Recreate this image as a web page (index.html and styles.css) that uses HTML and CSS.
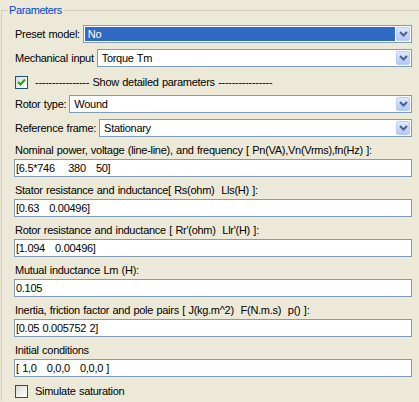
FILE: index.html
```html
<!DOCTYPE html>
<html>
<head>
<meta charset="utf-8">
<link rel="stylesheet" href="styles.css">
</head>
<body>
<fieldset class="group">
  <legend class="group-title">Parameters</legend>
  <div class="rows">
    <div class="select-row">
      <span class="lbl">Preset model:</span>
      <div class="combo combo-focus"><span class="combo-text">No</span><span class="combo-btn"><svg width="9" height="6" viewBox="0 0 9 6"><path d="M1 1 L4.5 4.5 L8 1" fill="none" stroke="#4d6185" stroke-width="2"/></svg></span></div>
    </div>
    <div class="select-row">
      <span class="lbl">Mechanical input</span>
      <div class="combo"><span class="combo-text">Torque Tm</span><span class="combo-btn"><svg width="9" height="6" viewBox="0 0 9 6"><path d="M1 1 L4.5 4.5 L8 1" fill="none" stroke="#4d6185" stroke-width="2"/></svg></span></div>
    </div>
    <div class="check-row check-top">
      <span class="check checked"><svg width="9" height="9" viewBox="0 0 9 9"><path d="M1 4 L3.5 6.5 L8 1.5" fill="none" stroke="#21a121" stroke-width="2"/></svg></span>
      <span class="check-lbl">---------------- Show detailed parameters ----------------</span>
    </div>
    <div class="select-row">
      <span class="lbl">Rotor type:</span>
      <div class="combo"><span class="combo-text">Wound</span><span class="combo-btn"><svg width="9" height="6" viewBox="0 0 9 6"><path d="M1 1 L4.5 4.5 L8 1" fill="none" stroke="#4d6185" stroke-width="2"/></svg></span></div>
    </div>
    <div class="select-row">
      <span class="lbl">Reference frame:</span>
      <div class="combo"><span class="combo-text">Stationary</span><span class="combo-btn"><svg width="9" height="6" viewBox="0 0 9 6"><path d="M1 1 L4.5 4.5 L8 1" fill="none" stroke="#4d6185" stroke-width="2"/></svg></span></div>
    </div>
    <div class="field">
      <div class="field-lbl">Nominal power, voltage (line-line), and frequency [ Pn(VA),Vn(Vrms),fn(Hz) ]:</div>
      <div class="edit">[6.5*746&nbsp;&nbsp;&nbsp;&nbsp;380&nbsp;&nbsp;&nbsp;50]</div>
    </div>
    <div class="field">
      <div class="field-lbl">Stator resistance and inductance[ Rs(ohm)&nbsp;&nbsp;Lls(H) ]:</div>
      <div class="edit">[0.63&nbsp;&nbsp;&nbsp;0.00496]</div>
    </div>
    <div class="field">
      <div class="field-lbl">Rotor resistance and inductance [ Rr'(ohm)&nbsp;&nbsp;Llr'(H) ]:</div>
      <div class="edit">[1.094&nbsp;&nbsp;&nbsp;0.00496]</div>
    </div>
    <div class="field">
      <div class="field-lbl">Mutual inductance Lm (H):</div>
      <div class="edit">0.105</div>
    </div>
    <div class="field">
      <div class="field-lbl">Inertia, friction factor and pole pairs [ J(kg.m^2)&nbsp;&nbsp;F(N.m.s)&nbsp;&nbsp;p() ]:</div>
      <div class="edit">[0.05 0.005752 2]</div>
    </div>
    <div class="field">
      <div class="field-lbl">Initial conditions</div>
      <div class="edit">[ 1,0&nbsp;&nbsp;&nbsp;0,0,0&nbsp;&nbsp;&nbsp;0,0,0 ]</div>
    </div>
    <div class="check-row check-bottom">
      <span class="check"></span>
      <span class="check-lbl">Simulate saturation</span>
    </div>
  </div>
</fieldset>
</body>
</html>
```
FILE: styles.css
```css
html, body {
  margin: 0;
  padding: 0;
  background: #ece9d8;
}
body {
  font-family: "Liberation Sans", Arial, sans-serif;
  font-size: 11px;
  letter-spacing: -0.28px;
  word-spacing: 0.6px;
  color: #000;
  overflow: hidden;
  width: 419px;
  height: 402px;
}
.group {
  margin: 3px 0 0 1px;
  padding: 0;
  border: 0;
  border-top: 1px solid #d0d0bf;
  border-left: 1px solid #d0d0bf;
  min-width: 0;
  height: 398px;
  box-sizing: border-box;
}
.group-title {
  margin-left: 6px;
  padding: 0 2px 0 1px;
  color: #0046d5;
  line-height: 14px;
  font-size: 11px;
  letter-spacing: -0.4px;
}
.rows {
  display: flex;
  flex-direction: column;
  padding: 8px 0 0 12px;
  width: 398px;
}
.select-row {
  display: flex;
  align-items: center;
  gap: 3px;
  margin-bottom: 6px;
  padding-left: 1px;
}
.lbl {
  white-space: nowrap;
  line-height: 14px;
}
.combo {
  flex: 1;
  height: 18px;
  box-sizing: border-box;
  border: 1px solid #7f9db9;
  background: #fff;
  display: flex;
  align-items: stretch;
  padding: 1px;
}
.combo-text {
  flex: 1;
  padding-left: 3px;
  line-height: 14px;
}
.combo-focus .combo-text {
  background: #316ac5;
  color: #fff;
  margin-right: 1px;
}
.combo-btn {
  width: 14px;
  box-sizing: border-box;
  border: 1px solid #b9cdf6;
  border-radius: 2px;
  background: linear-gradient(to bottom, #dfe8fe 0%, #c2d3fc 60%, #b4c8f7 100%);
  display: flex;
  align-items: center;
  justify-content: center;
}
.check-row {
  display: flex;
  align-items: center;
  gap: 7px;
  padding-left: 1px;
}
.check-top {
  margin-top: 2px;
  margin-bottom: 6px;
}
.check-bottom {
  margin-top: 1px;
}
.check {
  width: 13px;
  height: 13px;
  box-sizing: border-box;
  border: 1px solid #1c5180;
  background: linear-gradient(135deg, #dcdcd7 0%, #f4f4f0 70%, #ffffff 100%);
  display: flex;
  align-items: center;
  justify-content: center;
}
.check-lbl {
  white-space: nowrap;
  line-height: 14px;
}
.field {
  display: flex;
  flex-direction: column;
  margin-bottom: 6px;
}
.field-lbl {
  line-height: 14px;
  padding-left: 1px;
  margin-bottom: 2px;
  white-space: nowrap;
}
.edit {
  height: 18px;
  box-sizing: border-box;
  border: 1px solid #7f9db9;
  background: #fff;
  line-height: 16px;
  padding-left: 1px;
  white-space: nowrap;
}
```
